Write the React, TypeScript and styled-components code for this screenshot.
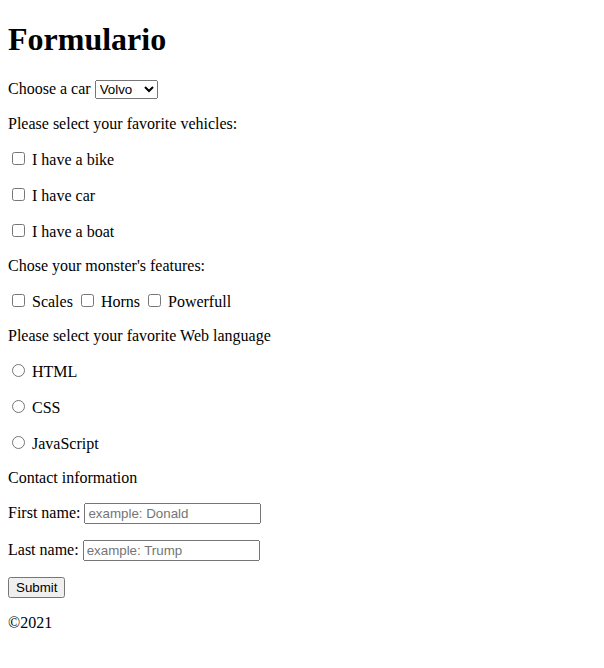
import React from "react";
import styled, { createGlobalStyle } from "styled-components";

const Global = createGlobalStyle`
  body {
    margin: 0 8px 8px;
    font-family: "Liberation Serif", "Times New Roman", serif;
    font-size: 16px;
    color: #000;
    background: #fff;
  }
`;

const Title = styled.h1`
  font-size: 32px;
  font-weight: bold;
  margin: 21.44px 0;
`;

const Row = styled.p`
  margin: 16px 0;
`;

const Select = styled.select`
  font-family: "Liberation Sans", Arial, sans-serif;
  font-size: 13.33px;
  box-sizing: border-box;
  width: 63px;
`;

const Check = styled.input`
  margin: 3px 3px 3px 4px;
`;

const TextField = styled.input`
  font-family: "Liberation Sans", Arial, sans-serif;
  font-size: 13.33px;
  box-sizing: border-box;
  width: 177px;
`;

const Button = styled.button`
  font-family: "Liberation Sans", Arial, sans-serif;
  font-size: 13.33px;
`;

const Footer = styled.footer``;

export default function App() {
  return (
    <>
      <Global />
      <Title>Formulario</Title>
      <form>
        <Row>
          <label htmlFor="cars">Choose a car </label>
          <Select id="cars" name="cars" defaultValue="volvo">
            <option value="volvo">Volvo</option>
            <option value="saab">Saab</option>
            <option value="fiat">Fiat</option>
            <option value="audi">Audi</option>
          </Select>
        </Row>
        <Row>Please select your favorite vehicles:</Row>
        <Row>
          <Check type="checkbox" id="v1" /> <label htmlFor="v1">I have a bike</label>
        </Row>
        <Row>
          <Check type="checkbox" id="v2" /> <label htmlFor="v2">I have car</label>
        </Row>
        <Row>
          <Check type="checkbox" id="v3" /> <label htmlFor="v3">I have a boat</label>
        </Row>
        <Row>Chose your monster's features:</Row>
        <Row>
          <Check type="checkbox" id="m1" /> <label htmlFor="m1">Scales</label>{" "}
          <Check type="checkbox" id="m2" /> <label htmlFor="m2">Horns</label>{" "}
          <Check type="checkbox" id="m3" /> <label htmlFor="m3">Powerfull</label>
        </Row>
        <Row>Please select your favorite Web language</Row>
        <Row>
          <Check type="radio" name="lang" id="html" /> <label htmlFor="html">HTML</label>
        </Row>
        <Row>
          <Check type="radio" name="lang" id="css" /> <label htmlFor="css">CSS</label>
        </Row>
        <Row>
          <Check type="radio" name="lang" id="js" /> <label htmlFor="js">JavaScript</label>
        </Row>
        <Row>Contact information</Row>
        <Row>
          <label htmlFor="fname">First name:</label>{" "}
          <TextField type="text" id="fname" placeholder="example: Donald" />
        </Row>
        <Row>
          <label htmlFor="lname">Last name:</label>{" "}
          <TextField type="text" id="lname" placeholder="example: Trump" />
        </Row>
        <Row>
          <Button type="submit">Submit</Button>
        </Row>
      </form>
      <Footer>
        <Row>©2021</Row>
      </Footer>
    </>
  );
}
